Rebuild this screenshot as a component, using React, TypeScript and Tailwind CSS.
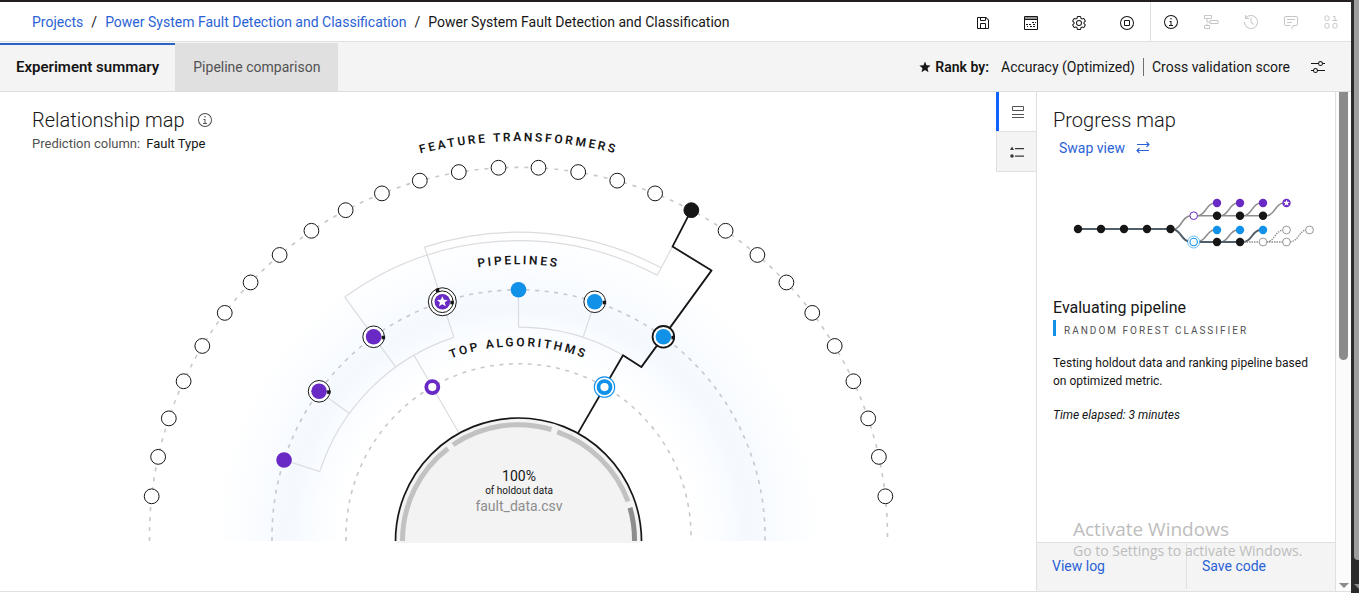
import type { ReactNode } from 'react';

const CX = 518.5;
const CY = 536.2;

function polar(radius: number, degrees: number) {
  const a = (degrees * Math.PI) / 180;
  return { x: CX - radius * Math.cos(a), y: CY - radius * Math.sin(a) };
}

function point(radius: number, degrees: number) {
  const p = polar(radius, degrees);
  return `${p.x.toFixed(1)} ${p.y.toFixed(1)}`;
}

function arc(radius: number, from: number, to: number) {
  return `M${point(radius, from)}A${radius} ${radius} 0 0 1 ${point(radius, to)}`;
}

function ring(radius: number) {
  return `M${CX - radius} 541V${CY}A${radius} ${radius} 0 0 1 ${CX + radius} ${CY}V541`;
}

function Icon({ children, size = 16 }: { children: ReactNode; size?: number }) {
  return (
    <svg width={size} height={size} viewBox="0 0 32 32" fill="currentColor" aria-hidden="true">
      {children}
    </svg>
  );
}

const InfoShape = () => (
  <>
    <path d="M17 22V14H13v2h2v6H12v2h8V22ZM16 8a1.5 1.5 0 1 0 1.5 1.5A1.5 1.5 0 0 0 16 8Z" />
    <path d="M16 30A14 14 0 1 1 30 16 14 14 0 0 1 16 30ZM16 4A12 12 0 1 0 28 16 12 12 0 0 0 16 4Z" />
  </>
);

const runTools = [
  {
    label: 'Save',
    shape: (
      <path d="M27.71 9.29l-5-5A1 1 0 0 0 22 4H6A2 2 0 0 0 4 6V26a2 2 0 0 0 2 2H26a2 2 0 0 0 2-2V10A1 1 0 0 0 27.71 9.29ZM12 6h8v4H12Zm8 20H12V18h8Zm2 0V18a2 2 0 0 0-2-2H12a2 2 0 0 0-2 2v8H6V6h4v4a2 2 0 0 0 2 2h8a2 2 0 0 0 2-2V6.41l4 4V26Z" />
    ),
  },
  {
    label: 'Log',
    shape: (
      <>
        <path fillRule="evenodd" d="M4 2H28a2 2 0 0 1 2 2V28a2 2 0 0 1-2 2H4a2 2 0 0 1-2-2V4A2 2 0 0 1 4 2ZM4 4V8H28V4ZM4 10V28H28V10Z" />
        <path d="M4 4H28V8H4Z" opacity="0.45" />
        <path d="M18 14h4v2H18ZM24 14h2v2H24ZM6 18h4v2H6ZM12 18h4v2H12ZM20 18h4v2H20ZM8 22h2v2H8ZM14 22h4v2H14ZM20 22h4v2H20Z" />
      </>
    ),
  },
  {
    label: 'Settings',
    shape: (
      <>
        <path d="M27 16.76c0-.25 0-.5 0-.76s0-.51 0-.77l1.92-1.68A2 2 0 0 0 29.3 11L26.94 7a2 2 0 0 0-1.73-1 2 2 0 0 0-.64.1l-2.43.82a11.35 11.35 0 0 0-1.31-.75l-.51-2.52a2 2 0 0 0-2-1.61H13.64a2 2 0 0 0-2 1.61l-.51 2.52a11.48 11.48 0 0 0-1.32.75L7.43 6.06A2 2 0 0 0 6.79 6 2 2 0 0 0 5.06 7L2.7 11a2 2 0 0 0 .41 2.51L5 15.24c0 .25 0 .5 0 .76s0 .51 0 .77L3.11 18.45A2 2 0 0 0 2.7 21L5.06 25a2 2 0 0 0 1.73 1 2 2 0 0 0 .64-.1l2.43-.82a11.35 11.35 0 0 0 1.31.75l.51 2.52a2 2 0 0 0 2 1.61h4.72a2 2 0 0 0 2-1.61l.51-2.52a11.48 11.48 0 0 0 1.32-.75l2.42.82a2 2 0 0 0 .64.1 2 2 0 0 0 1.73-1L29.3 21a2 2 0 0 0-.41-2.51ZM25.21 24l-3.43-1.16a8.86 8.86 0 0 1-2.71 1.57L18.36 28H13.64l-.71-3.55a9.36 9.36 0 0 1-2.7-1.57L6.79 24 4.43 20l2.72-2.4a8.9 8.9 0 0 1 0-3.13L4.43 12 6.79 8l3.43 1.16a8.86 8.86 0 0 1 2.71-1.57L13.64 4h4.72l.71 3.55a9.36 9.36 0 0 1 2.7 1.57L25.21 8 27.57 12l-2.72 2.4a8.9 8.9 0 0 1 0 3.13L27.57 20Z" />
        <path d="M16 22a6 6 0 1 1 6-6A5.94 5.94 0 0 1 16 22Zm0-10a3.91 3.91 0 0 0-4 4 3.91 3.91 0 0 0 4 4 3.91 3.91 0 0 0 4-4A3.91 3.91 0 0 0 16 12Z" />
      </>
    ),
  },
  {
    label: 'Stop',
    shape: (
      <>
        <path d="M16 30A14 14 0 1 1 30 16 14 14 0 0 1 16 30ZM16 4A12 12 0 1 0 28 16 12 12 0 0 0 16 4Z" />
        <path fillRule="evenodd" d="M12 10h8a2 2 0 0 1 2 2v8a2 2 0 0 1-2 2H12a2 2 0 0 1-2-2V12a2 2 0 0 1 2-2ZM12 12v8h8V12Z" />
      </>
    ),
  },
];

const panelTools = [
  { label: 'Information', off: false, shape: <InfoShape /> },
  {
    label: 'Flow',
    off: true,
    shape: (
      <g fill="none" stroke="currentColor" strokeWidth="2">
        <path d="M3 3H17V9H3ZM14 13H30V19H14ZM3 23H13V29H3ZM8 9V16H14M8 23V19" />
      </g>
    ),
  },
  {
    label: 'History',
    off: true,
    shape: (
      <>
        <path d="M20.59 22 15 16.41V7h2v8.58l5 5.01L20.59 22z" />
        <path d="M16 2A13.94 13.94 0 0 0 6 6.23V2H4v8h8V8H7.08A12 12 0 1 1 4 16H2A14 14 0 1 0 16 2Z" />
      </>
    ),
  },
  {
    label: 'Comments',
    off: true,
    shape: (
      <>
        <path d="M17.74 30 16 29l4-7h6a2 2 0 0 0 2-2V8a2 2 0 0 0-2-2H6a2 2 0 0 0-2 2v12a2 2 0 0 0 2 2h9v2H6a4 4 0 0 1-4-4V8a4 4 0 0 1 4-4h20a4 4 0 0 1 4 4v12a4 4 0 0 1-4 4h-4.84Z" />
        <path d="M8 10h16v2H8zM8 16h10v2H8z" />
      </>
    ),
  },
  {
    label: 'Data',
    off: true,
    shape: (
      <g fill="none" stroke="currentColor" strokeWidth="2">
        <rect x="4" y="4" width="8" height="9" rx="2.5" />
        <path d="M20 5H24V13M19 13H29" />
        <rect x="4" y="19" width="8" height="9" rx="2.5" />
        <rect x="20" y="19" width="8" height="9" rx="2.5" />
      </g>
    ),
  },
];

const STAR = 'M0-5.6 1.5-1.9 5.4-1.7 2.4.7 3.4 4.6 0 2.4-3.4 4.6-2.4.7-5.4-1.7-1.5-1.9Z';

const pipelines = [
  { at: 18, color: '#6929c4', rings: 0, active: false },
  { at: 36, color: '#6929c4', rings: 1, active: false },
  { at: 54, color: '#6929c4', rings: 1, active: false },
  { at: 72, color: '#6929c4', rings: 2, active: false },
  { at: 90, color: '#1192e8', rings: 0, active: false },
  { at: 108, color: '#1192e8', rings: 1, active: false },
  { at: 126, color: '#1192e8', rings: 1, active: true },
];

function RelationshipChart() {
  const step = 180 / 29;
  const transformers = Array.from({ length: 28 }, (_, i) => i + 1);
  return (
    <svg viewBox="0 92 996 499" preserveAspectRatio="xMinYMin meet" className="col-start-1 row-start-1 h-full w-full" role="img" aria-label="Relationship map chart">
      <defs>
        <radialGradient id="glow" gradientUnits="userSpaceOnUse" cx={CX} cy={CY} r="304">
          <stop offset="0.58" stopColor="#edf5ff" stopOpacity="0" />
          <stop offset="0.68" stopColor="#edf5ff" stopOpacity="0.3" />
          <stop offset="0.76" stopColor="#edf5ff" stopOpacity="0.6" />
          <stop offset="0.86" stopColor="#edf5ff" stopOpacity="0.3" />
          <stop offset="1" stopColor="#edf5ff" stopOpacity="0" />
        </radialGradient>
        <path id="arc-features" d={arc(395, 0, 180)} />
        <path id="arc-pipelines" d={arc(272, 0, 180)} />
        <path id="arc-algorithms" d={arc(190, 0, 180)} />
      </defs>
      <path d="M214.5 541V536.5A304 304 0 0 1 822.5 536.5V541Z" fill="url(#glow)" />
      <g fill="none" stroke="#c8c8cd" strokeWidth="1.6">
        <path d={ring(369)} strokeDasharray="4 6" />
        <path d={ring(246.5)} strokeDasharray="4 5.5" />
        <path d={ring(172.5)} strokeDasharray="4 5.5" />
      </g>
      <g fill="none" stroke="#dcdce0" strokeWidth="1.2">
        <path d={arc(304, 72, 118)} />
        <path d={arc(295.5, 54, 118)} />
        <path d={arc(209, 18, 72)} />
        <path d={arc(209, 90, 120)} />
        <path d={`M${point(246.5, 18)}L${point(209, 18)}`} />
        <path d={`M${point(246.5, 36)}L${point(209, 36)}`} />
        <path d={`M${point(295.5, 54)}L${point(209, 54)}`} />
        <path d={`M${point(304, 72)}L${point(209, 72)}`} />
        <path d={`M${point(246.5, 90)}L${point(209, 90)}`} />
        <path d={`M${point(246.5, 108)}L${point(209, 108)}`} />
        <path d={`M${point(209, 60)}L${point(120, 60)}`} />
        <path d={`M${point(328, 118)}L${point(295.5, 118)}`} />
      </g>
      <path
        d={`M${point(369, step * 19)}L${point(328, 118)}L${point(328.5, 126)}L${point(209, 126)}L${point(209, 120)}L${point(119, 120)}`}
        fill="none"
        stroke="#161616"
        strokeWidth="1.8"
        strokeLinejoin="round"
      />
      {transformers.map((i) => {
        const p = polar(369, step * i);
        return <circle key={i} cx={p.x} cy={p.y} r="7.4" fill={i === 19 ? '#161616' : '#fff'} stroke="#161616" />;
      })}
      {pipelines.map((n) => {
        const p = polar(246.5, n.at);
        return (
          <g key={n.at} transform={`translate(${p.x} ${p.y})`}>
            {n.rings > 1 && <circle r="14" fill="#fff" stroke="#161616" />}
            {n.rings > 0 && <circle r="10.8" fill="#fff" stroke="#161616" strokeWidth={n.active ? 1.8 : 1} />}
            <circle r="7.8" fill={n.color} />
            {n.rings > 0 && <rect x="8" y="-1" width="3.5" height="3.5" fill="#161616" />}
            {n.rings > 1 && <rect x="-6.5" y="-13" width="3.5" height="3.5" fill="#161616" />}
            {n.rings > 1 && <path d={STAR} fill="#fff" />}
          </g>
        );
      })}
      <circle cx="432.3" cy="387.1" r="6" fill="#fff" stroke="#6929c4" strokeWidth="3.8" />
      <circle cx="604.5" cy="387.1" r="10.2" fill="#fff" stroke="#1192e8" strokeWidth="1.1" />
      <circle cx="604.5" cy="387.1" r="6" fill="#fff" stroke="#1192e8" strokeWidth="3.8" />

      <path d="M395.5 541A123 123 0 0 1 641.5 541V543H395.5Z" fill="#f3f3f3" />
      <path d="M395.5 541A123 123 0 0 1 641.5 541" fill="none" stroke="#161616" strokeWidth="1.7" />
      <g fill="none" strokeWidth="5" stroke="#c2c2c2">
        <path d="M402.5 541A116 116 0 0 1 448 448.6" />
        <path d="M453 444.8A116 116 0 0 1 551.5 429.5" />
        <path d="M557.3 431.8A116 116 0 0 1 628 501.5" />
        <path d="M630 507.8A116 116 0 0 1 634.5 541" stroke="#8d8d8d" />
      </g>

      <g fill="#161616" fontSize="12" fontWeight="600" letterSpacing="2.6" textAnchor="middle">
        <text><textPath href="#arc-features" startOffset="50%">FEATURE TRANSFORMERS</textPath></text>
        <text><textPath href="#arc-pipelines" startOffset="50%">PIPELINES</textPath></text>
        <text><textPath href="#arc-algorithms" startOffset="50%">TOP ALGORITHMS</textPath></text>
      </g>
      <g textAnchor="middle" fill="#161616">
        <text x="519" y="481" fontSize="14">100%</text>
        <text x="519" y="494" fontSize="10">of holdout data</text>
        <text x="519" y="511" fontSize="14" fill="#8d8d8d">fault_data.csv</text>
      </g>
    </svg>
  );
}

function ProgressChart() {
  const dots: [number, number, string][] = [
    [1078, 229, '#161616'], [1101, 229, '#161616'], [1124, 229, '#161616'], [1147, 229, '#161616'], [1170.5, 229, '#161616'],
    [1217, 203, '#6929c4'], [1240, 203, '#6929c4'], [1263, 203, '#6929c4'], [1286.5, 203, '#6929c4'],
    [1217, 215.7, '#161616'], [1240, 215.7, '#161616'], [1263, 215.7, '#161616'],
    [1217, 230, '#1192e8'], [1240, 230, '#1192e8'], [1263, 230, '#1192e8'],
    [1217, 242, '#161616'], [1240, 242, '#161616'],
  ];
  const empty: [number, number][] = [[1263, 242], [1286.5, 242], [1286.5, 230], [1309.5, 230]];
  return (
    <svg viewBox="1053 180 282 80" className="h-20 w-full" preserveAspectRatio="xMinYMin meet" role="img" aria-label="Progress map chart">
      <g fill="none" stroke="#8d8d8d" strokeWidth="1.6">
        <path d="M1175 229C1182 227 1182 216 1191 215.7H1263" />
        <path d="M1198 215.7C1206 215 1206 204 1214 203M1221 215.7C1229 215 1229 204 1237 203M1244 215.7C1252 215 1252 204 1260 203M1267 215.7C1275 215 1275 204 1283 203" />
        <path d="M1200 241C1206 240 1207 231 1214 230M1221 242C1229 241 1229 231 1237 230" />
      </g>
      <path d="M1078 229H1173C1182 231 1181 241 1190 242H1240M1244 242C1252 241 1252 231 1260 230" fill="none" stroke="#525f68" strokeWidth="2" />
      <g fill="none" stroke="#8d8d8d" strokeWidth="1.3" strokeDasharray="1.5 1">
        <path d="M1244 242H1286M1267 242C1275 241 1275 231 1283 230M1290 242C1299 241 1299 231 1306 230" />
      </g>
      {dots.map(([x, y, fill]) => <circle key={`${x}-${y}`} cx={x} cy={y} r="4.2" fill={fill} />)}
      {empty.map(([x, y]) => <circle key={`${x}-${y}`} cx={x} cy={y} r="3.9" fill="#fff" stroke="#8d8d8d" strokeWidth="0.9" />)}
      <path d={STAR} transform="translate(1286.5 203) scale(0.6)" fill="#fff" />
      <circle cx="1193.7" cy="215.7" r="3.8" fill="#fff" stroke="#6929c4" />
      <circle cx="1193.7" cy="242" r="6" fill="#fff" stroke="#1192e8" strokeWidth="0.6" />
      <circle cx="1193.7" cy="242" r="3.7" fill="#fff" stroke="#1192e8" strokeWidth="1.1" />
    </svg>
  );
}

function Header() {
  return (
    <header className="flex h-10 shrink-0 items-stretch justify-between border-b border-[#e0e0e0]">
      <nav aria-label="Breadcrumb" className="flex items-center gap-2 pl-8 text-sm">
        <a href="#projects" className="text-[#2a62d6]">Projects</a>
        <span>/</span>
        <a href="#project" className="text-[#2a62d6]">Power System Fault Detection and Classification</a>
        <span>/</span>
        <span>Power System Fault Detection and Classification</span>
      </nav>
      <div className="flex">
        <div className="flex pt-0.5">
          {runTools.map((t) => (
            <button key={t.label} aria-label={t.label} className="flex w-12 items-center justify-center">
              <Icon>{t.shape}</Icon>
            </button>
          ))}
        </div>
        <div className="-ml-px flex border-l border-[#e0e0e0]">
          {panelTools.map((t) => (
            <button key={t.label} aria-label={t.label} disabled={t.off} className={`flex w-10 items-center justify-center ${t.off ? 'text-[#c6c6c6]' : ''}`}>
              <Icon>{t.shape}</Icon>
            </button>
          ))}
        </div>
      </div>
    </header>
  );
}

function TabBar() {
  return (
    <div className="flex h-[50px] shrink-0 items-stretch justify-between border-b border-[#dcdcdc] bg-[#f4f4f4] text-sm">
      <div role="tablist" className="flex pt-px">
        <button role="tab" aria-selected="true" className="border-t-2 border-[#2a62c6] px-4 text-[15px] font-semibold">Experiment summary</button>
        <button role="tab" aria-selected="false" className="bg-[#e0e0e0] px-[18px] text-[#525252]">Pipeline comparison</button>
      </div>
      <div className="flex items-center pr-[25px]">
        <svg viewBox="0 0 12 12" className="mr-1 h-3 w-3" aria-hidden="true">
          <path d="M6 .5 7.5 4.3 11.6 4.6 8.5 7.2 9.5 11.3 6 9 2.5 11.3 3.5 7.2.4 4.6 4.5 4.3Z" fill="#161616" />
        </svg>
        <span className="font-semibold">Rank by:</span>
        <span className="ml-3">Accuracy (Optimized)</span>
        <span className="ml-2 border-l border-[#6f6f6f] py-px pl-2 leading-4">Cross validation score</span>
        <button aria-label="Ranking options" className="ml-5">
          <Icon>
            <path fillRule="evenodd" d="M30 8h-4.1A5 5 0 0 0 16.1 8H2v2H16.1a5 5 0 0 0 9.8 0H30ZM21 12a3 3 0 1 1 3-3 3 3 0 0 1-3 3ZM2 24H6.1a5 5 0 0 0 9.8 0H30V22H15.9a5 5 0 0 0-9.8 0H2Zm9-4a3 3 0 1 1-3 3 3 3 0 0 1 3-3Z" />
          </Icon>
        </button>
      </div>
    </div>
  );
}

function ProgressPanel() {
  return (
    <aside className="relative flex w-[300px] shrink-0 flex-col border-x border-[#e0e0e0]">
      <div className="flex-1 pl-4">
        <h2 className="mt-[14px] text-xl leading-7 font-light">Progress map</h2>
        <a href="#swap" className="ml-1.5 flex items-center gap-2.5 text-sm leading-7 text-[#2a62d6]">
          Swap view
          <svg viewBox="0 0 16 16" className="h-4 w-4" fill="none" stroke="currentColor" strokeWidth="1.1" aria-hidden="true">
            <path d="M2 4.5H14M11.5 2 14 4.5 11.5 7M14 10.5H2M4.5 8 2 10.5 4.5 13" />
          </svg>
        </a>
        <div className="pt-[18px]">
          <ProgressChart />
        </div>
        <h3 className="mt-9 text-base leading-6">Evaluating pipeline</h3>
        <p className="flex h-4 items-center border-l-3 border-[#1192e8] pt-1 pl-2 text-[10px] tracking-[2px] text-[#525252]">RANDOM FOREST CLASSIFIER</p>
        <p className="mt-[18px] pr-6 text-xs leading-[18px]">Testing holdout data and ranking pipeline based on optimized metric.</p>
        <p className="mt-4 text-xs leading-[18px] italic">Time elapsed: 3 minutes</p>
      </div>
      <footer className="grid h-[49px] grid-cols-2 border-t border-[#e0e0e0] bg-[#f4f4f4] pb-0.5 text-sm text-[#2a62d6]">
        <a href="#log" className="flex items-center pl-[15px]">View log</a>
        <a href="#code" className="flex items-center border-l border-[#e0e0e0] pl-[15px]">Save code</a>
      </footer>
      <div className="pointer-events-none absolute bottom-8 left-9 font-['Open_Sans',sans-serif] whitespace-nowrap text-[#bdbdbd]">
        <p className="text-[19px] leading-7">Activate Windows</p>
        <p className="text-sm leading-4">Go to Settings to activate Windows.</p>
      </div>
    </aside>
  );
}

function Caret() {
  return (
    <svg viewBox="0 0 10 5" className="h-[5px] w-[10px] shrink-0" aria-hidden="true">
      <path d="M0 0H10L5 5Z" fill="#8a8a8a" />
    </svg>
  );
}

export default function App() {
  return (
    <div className="flex h-screen overflow-hidden bg-white font-['Roboto',sans-serif] text-[#161616]">
      <div className="flex min-w-0 flex-1 flex-col border-t-2 border-[#231f20]">
        <Header />
        <TabBar />
        <div className="mb-px flex min-h-0 flex-1 border-b border-[#e0e0e0]">
          <main className="grid min-w-0 flex-1 grid-cols-1 grid-rows-1">
            <RelationshipChart />
            <div className="z-10 col-start-1 row-start-1 justify-self-start pt-[14px] pl-8">
              <h1 className="flex items-center gap-3 text-xl leading-7 font-light">
                Relationship map
                <span className="text-[#525252]"><Icon><InfoShape /></Icon></span>
              </h1>
              <p className="text-[13px] leading-5"><span className="mr-1.5 text-[#525252]">Prediction column:</span>Fault Type</p>
            </div>
          </main>
          <div className="flex w-10 shrink-0 flex-col">
            <button aria-label="Map view" className="flex h-[39px] items-center justify-center border-l-3 border-[#0f62fe] text-[#525252]">
              <svg width="14" height="14" viewBox="0 0 14 14" fill="none" stroke="currentColor" aria-hidden="true">
                <path d="M1.5 1.5H12.5V5.5H1.5ZM1 9.5H13M1 12.5H13" />
              </svg>
            </button>
            <button aria-label="Legend" className="flex h-[41px] items-center justify-center border border-r-0 border-[#e0e0e0] bg-[#f4f4f4] text-[#393939]">
              <svg width="16" height="14" viewBox="0 0 16 14" fill="currentColor" aria-hidden="true">
                <path d="M3 1.5 5 5H1ZM6 3H15V4.2H6ZM6 10.5H15V11.7H6Z" />
                <circle cx="3" cy="11" r="1.8" />
              </svg>
            </button>
          </div>
          <ProgressPanel />
          <div className="flex w-[15px] shrink-0 flex-col items-center justify-between bg-[#fbfbfb] pb-[3px]" aria-hidden="true">
            <div className="h-[54%] w-[9px] rounded-b-full bg-[#8b8b8b]" />
            <Caret />
          </div>
        </div>
      </div>
      <div className="flex w-2 shrink-0 flex-col justify-between overflow-hidden border-l-3 border-[#2b2b2b] bg-[#2b2b2b] pb-1" aria-hidden="true">
        <div className="h-[95%] rounded-bl bg-[#9e9e9e]" />
        <Caret />
      </div>
    </div>
  );
}
